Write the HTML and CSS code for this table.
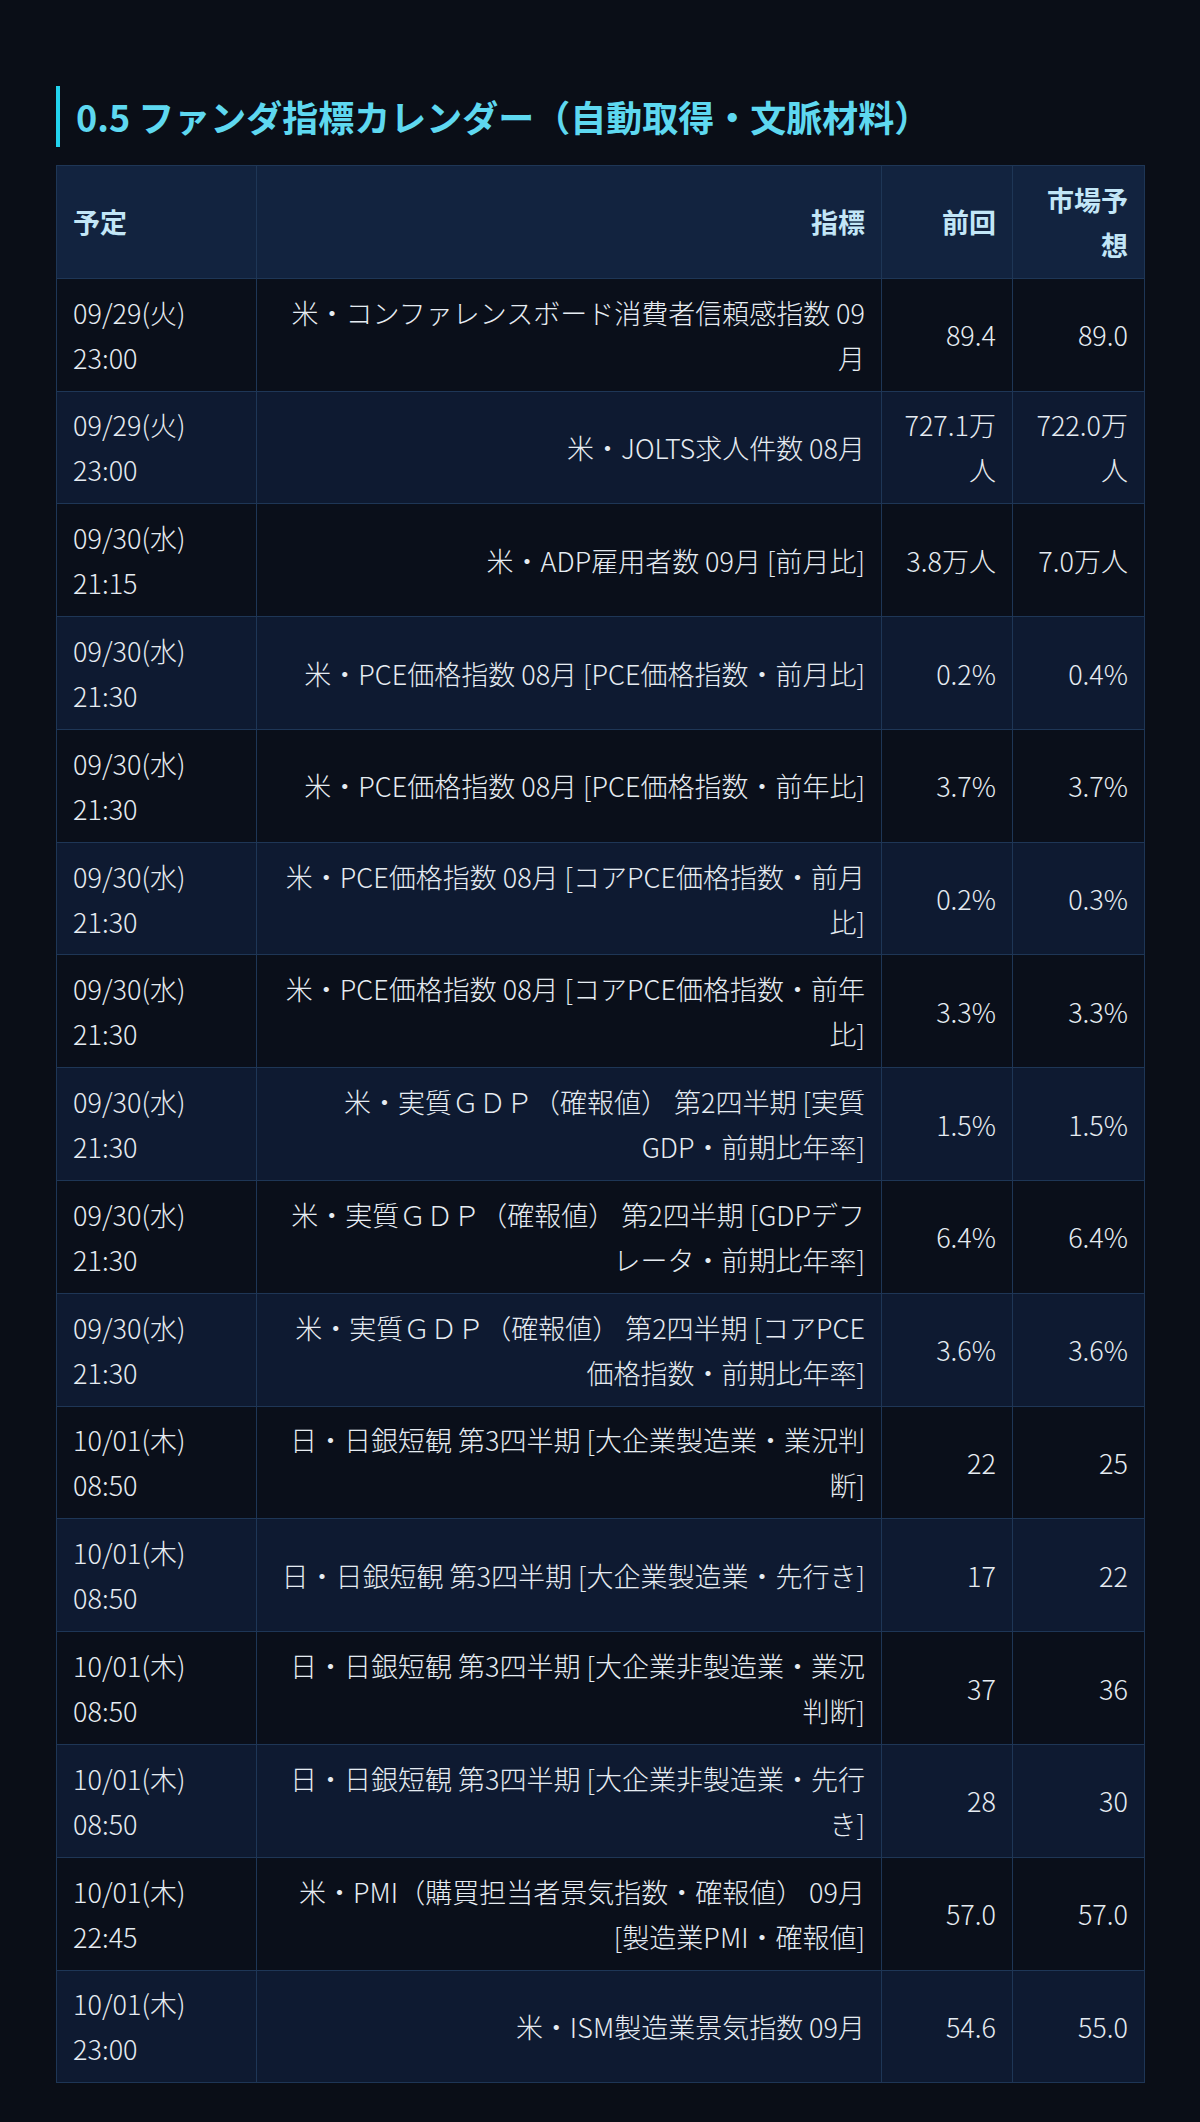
FILE: index.html
```html
<!DOCTYPE html>
<html lang="ja">
<head>
<meta charset="utf-8">
<title>ファンダ指標カレンダー</title>
<link rel="stylesheet" href="styles.css">
</head>
<body>
<main class="page">
  <h2 class="section-title">0.5 ファンダ指標カレンダー（自動取得・文脈材料）</h2>
  <table class="cal">
    <colgroup>
      <col class="c-date">
      <col class="c-name">
      <col class="c-prev">
      <col class="c-fc">
    </colgroup>
    <thead>
      <tr><th class="l">予定</th><th>指標</th><th>前回</th><th>市場予想</th></tr>
    </thead>
    <tbody>
      <tr><td class="l">09/29(火)<br>23:00</td><td>米・コンファレンスボード消費者信頼感指数 09月</td><td>89.4</td><td>89.0</td></tr>
      <tr><td class="l">09/29(火)<br>23:00</td><td>米・JOLTS求人件数 08月</td><td>727.1万人</td><td>722.0万人</td></tr>
      <tr><td class="l">09/30(水)<br>21:15</td><td>米・ADP雇用者数 09月 [前月比]</td><td>3.8万人</td><td>7.0万人</td></tr>
      <tr><td class="l">09/30(水)<br>21:30</td><td>米・PCE価格指数 08月 [PCE価格指数・前月比]</td><td>0.2%</td><td>0.4%</td></tr>
      <tr><td class="l">09/30(水)<br>21:30</td><td>米・PCE価格指数 08月 [PCE価格指数・前年比]</td><td>3.7%</td><td>3.7%</td></tr>
      <tr><td class="l">09/30(水)<br>21:30</td><td>米・PCE価格指数 08月 [コアPCE価格指数・前月比]</td><td>0.2%</td><td>0.3%</td></tr>
      <tr><td class="l">09/30(水)<br>21:30</td><td>米・PCE価格指数 08月 [コアPCE価格指数・前年比]</td><td>3.3%</td><td>3.3%</td></tr>
      <tr><td class="l">09/30(水)<br>21:30</td><td>米・実質ＧＤＰ（確報値） 第2四半期 [実質GDP・前期比年率]</td><td>1.5%</td><td>1.5%</td></tr>
      <tr><td class="l">09/30(水)<br>21:30</td><td>米・実質ＧＤＰ（確報値） 第2四半期 [GDPデフレータ・前期比年率]</td><td>6.4%</td><td>6.4%</td></tr>
      <tr><td class="l">09/30(水)<br>21:30</td><td>米・実質ＧＤＰ（確報値） 第2四半期 [コアPCE価格指数・前期比年率]</td><td>3.6%</td><td>3.6%</td></tr>
      <tr><td class="l">10/01(木)<br>08:50</td><td>日・日銀短観 第3四半期 [大企業製造業・業況判断]</td><td>22</td><td>25</td></tr>
      <tr><td class="l">10/01(木)<br>08:50</td><td>日・日銀短観 第3四半期 [大企業製造業・先行き]</td><td>17</td><td>22</td></tr>
      <tr><td class="l">10/01(木)<br>08:50</td><td>日・日銀短観 第3四半期 [大企業非製造業・業況判断]</td><td>37</td><td>36</td></tr>
      <tr><td class="l">10/01(木)<br>08:50</td><td>日・日銀短観 第3四半期 [大企業非製造業・先行き]</td><td>28</td><td>30</td></tr>
      <tr><td class="l">10/01(木)<br>22:45</td><td>米・PMI（購買担当者景気指数・確報値） 09月 [製造業PMI・確報値]</td><td>57.0</td><td>57.0</td></tr>
      <tr><td class="l">10/01(木)<br>23:00</td><td>米・ISM製造業景気指数 09月</td><td>54.6</td><td>55.0</td></tr>
    </tbody>
  </table>
</main>
</body>
</html>
```

FILE: styles.css
```css
html, body {
  margin: 0;
  padding: 0;
  background: #0a0e17;
}

body {
  font-family: "Noto Sans CJK JP", "Noto Sans", sans-serif;
  color: #e3e9f0;
}

.page {
  padding: 86px 56px 36px 56px;
}

.section-title {
  margin: 0 0 18px 0;
  padding: 6px 0 6px 16px;
  border-left: 4px solid #22d3ee;
  font-size: 36px;
  line-height: 49px;
  font-weight: 700;
  color: #5ed8f0;
}

.cal {
  width: 1088px;
  border-collapse: collapse;
  table-layout: fixed;
  font-size: 27px;
  line-height: 45px;
}

.c-date { width: 200px; }
.c-name { width: 625px; }
.c-prev { width: 131px; }
.c-fc { width: 132px; }

.cal th,
.cal td {
  border: 1px solid #1e3656;
  padding: 10.9px 16px;
  text-align: right;
  vertical-align: middle;
}

.cal th {
  background: #12233f;
  color: #c2e6f7;
  font-weight: 700;
}

.cal td {
  color: #e6ecf2;
  font-weight: 300;
}

.cal .l {
  text-align: left;
}

.cal tbody tr:nth-child(odd) td {
  background: #0a0f1a;
}

.cal tbody tr:nth-child(even) td {
  background: #0e1a31;
}
```
